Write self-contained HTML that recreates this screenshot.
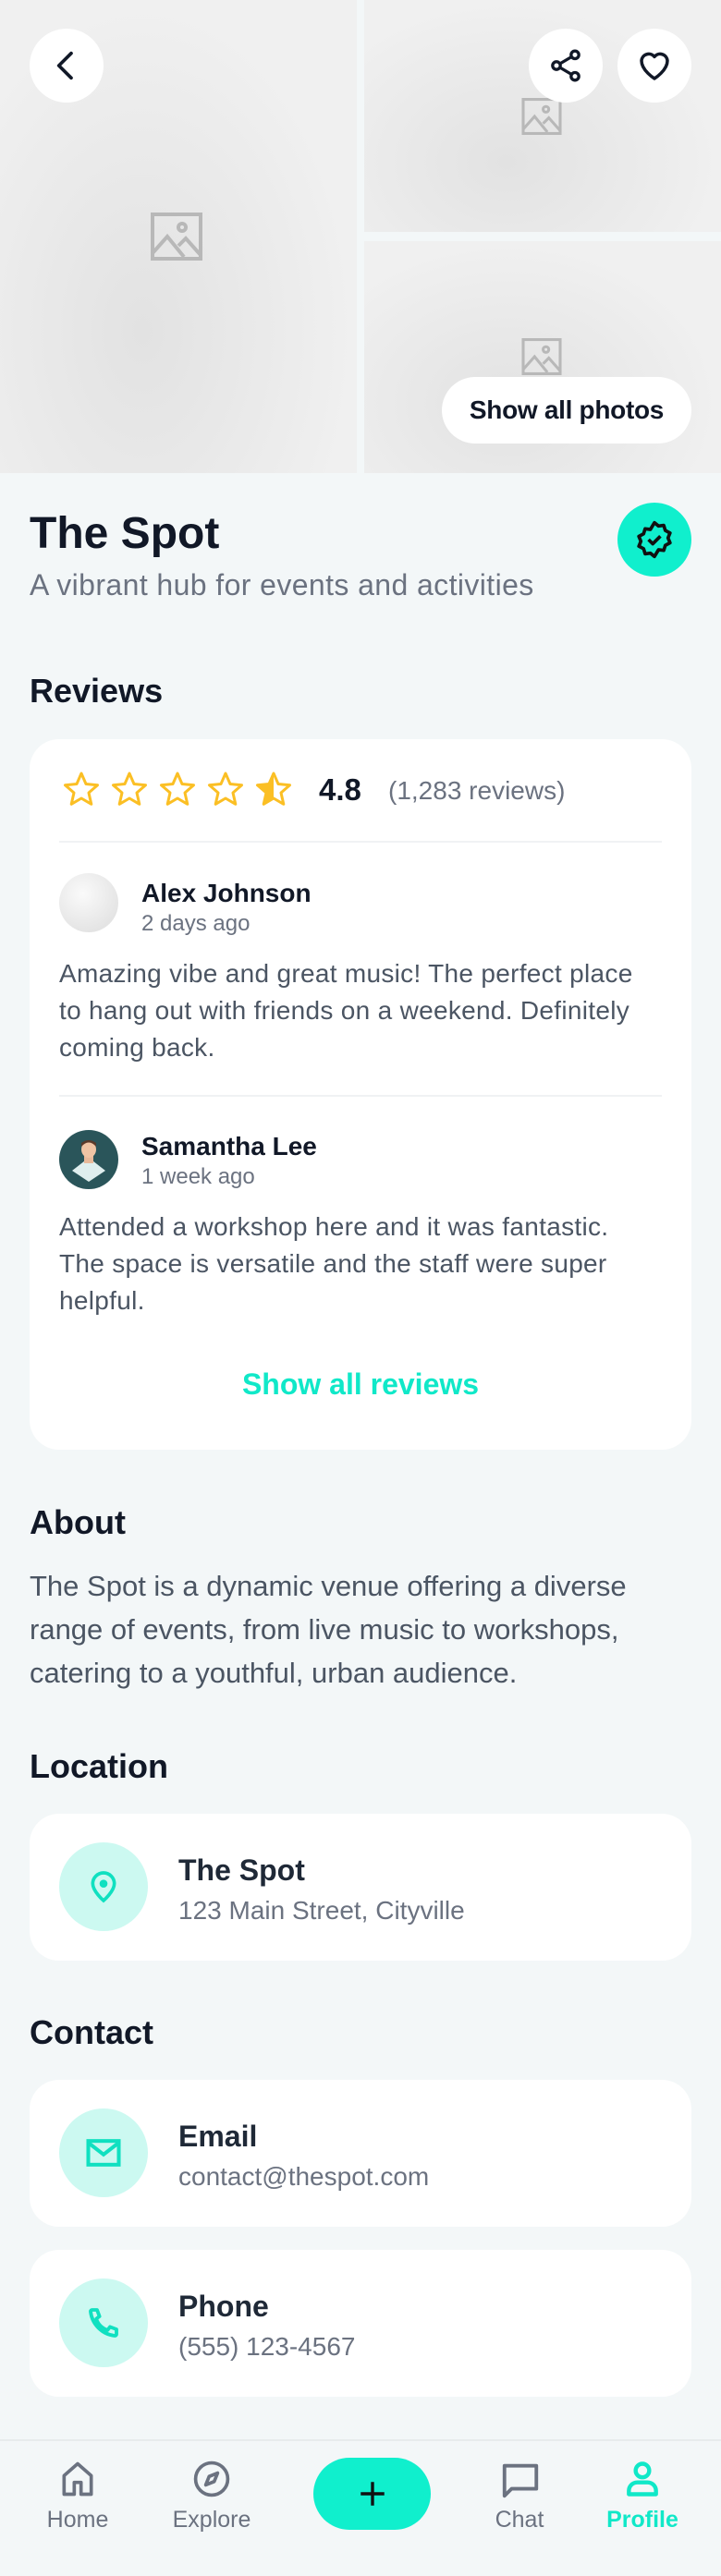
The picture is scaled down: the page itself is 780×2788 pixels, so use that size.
<!DOCTYPE html>
<html><head><meta charset="utf-8"><style>
*{margin:0;padding:0;box-sizing:border-box}
body{width:780px;height:2788px;background:#f3f7f8;font-family:"Liberation Sans",sans-serif;position:relative;overflow:hidden;color:#111827}
.a{position:absolute}
.img{position:absolute;background:radial-gradient(ellipse at 40% 70%,#e2e2e2,#f0f0f0 70%)}
.circ{position:absolute;width:80px;height:80px;border-radius:50%;background:#fff;display:flex;align-items:center;justify-content:center}
.card{position:absolute;left:32px;width:716px;background:#fff;border-radius:32px}
h2{position:absolute;left:32px;font-size:36px;font-weight:bold;color:#111827;line-height:40px}
.gray{color:#6b7280}
.rt{position:absolute;font-size:28px;line-height:40px;color:#4b5563;left:64px;width:680px;white-space:nowrap}
.ic{position:absolute;left:64px;width:96px;height:96px;border-radius:50%;background:#ccf9f1;display:flex;align-items:center;justify-content:center}
.t1{position:absolute;left:193px;font-size:32px;font-weight:bold;color:#1f2937}
.t2{position:absolute;left:193px;font-size:28px;color:#6b7280}
.nav{position:absolute;top:2661px;margin-left:-22px}
.nl{position:absolute;top:2713px;font-size:25px;color:#6b7280;width:140px;margin-left:-70px;text-align:center}
</style></head><body>
<div class="img" style="left:0;top:0;width:386px;height:512px"></div>
<div class="img" style="left:394px;top:0;width:386px;height:251px"></div>
<div class="img" style="left:394px;top:261px;width:386px;height:251px"></div>
<svg class="a" style="left:163px;top:230px" width="56" height="52" viewBox="0 0 56 52" fill="none" stroke="#b8b8b8" stroke-width="4"><rect x="2" y="2" width="52" height="48"/><path d="M2 44l16-18 18 22M30 36l8-8 16 18"/><circle cx="34" cy="16" r="4"/></svg>
<svg class="a" style="left:564px;top:106px" width="44" height="40" viewBox="0 0 56 52" fill="none" stroke="#b8b8b8" stroke-width="4"><rect x="2" y="2" width="52" height="48"/><path d="M2 44l16-18 18 22M30 36l8-8 16 18"/><circle cx="34" cy="16" r="4"/></svg>
<svg class="a" style="left:564px;top:366px" width="44" height="40" viewBox="0 0 56 52" fill="none" stroke="#b8b8b8" stroke-width="4"><rect x="2" y="2" width="52" height="48"/><path d="M2 44l16-18 18 22M30 36l8-8 16 18"/><circle cx="34" cy="16" r="4"/></svg>
<div class="circ" style="left:32px;top:31px"><svg width="40" height="40" viewBox="0 0 24 24" fill="none" stroke="#111827" stroke-width="2.2" stroke-linecap="round" stroke-linejoin="round"><path d="M15 4l-8 8 8 8"/></svg></div>
<div class="circ" style="left:572px;top:31px"><svg width="40" height="40" viewBox="0 0 24 24" fill="none" stroke="#111827" stroke-width="2"><circle cx="18" cy="5" r="2.5"/><circle cx="6" cy="12" r="2.5"/><circle cx="18" cy="19" r="2.5"/><path d="M8.2 10.8l7.6-4.5M8.2 13.2l7.6 4.5"/></svg></div>
<div class="circ" style="left:668px;top:31px"><svg width="42" height="42" viewBox="0 0 24 24" fill="none" stroke="#111827" stroke-width="2" stroke-linejoin="round"><path d="M12 20s-8-5-8-11a4.5 4.5 0 0 1 8-2.5A4.5 4.5 0 0 1 20 9c0 6-8 11-8 11z"/></svg></div>
<div class="a" style="left:478px;top:408px;width:270px;height:72px;border-radius:36px;background:#fff;font-size:28px;font-weight:bold;color:#111827;line-height:72px;text-align:center;letter-spacing:-0.3px">Show all photos</div>
<div class="a" style="left:32px;top:548px;font-size:48px;font-weight:bold;line-height:60px">The Spot</div>
<div class="a gray" style="left:32px;top:612px;font-size:32px;line-height:42px;letter-spacing:0.4px">A vibrant hub for events and activities</div>
<div class="a" style="left:668px;top:544px;width:80px;height:80px;border-radius:50%;background:#10efcd;display:flex;align-items:center;justify-content:center"><svg width="44" height="44" viewBox="0 0 24 24" fill="none" stroke="#111" stroke-width="2" stroke-linejoin="round"><path d="M12 2l2.4 2 3.1-.4.9 3 2.8 1.5-1.2 2.9 1.2 2.9-2.8 1.5-.9 3-3.1-.4L12 22l-2.4-2-3.1.4-.9-3-2.8-1.5 1.2-2.9L2.8 10.1 5.6 8.6l.9-3 3.1.4z"/><path d="M8.5 12l2.5 2.5 4.5-4.5"/></svg></div>
<h2 style="top:728px">Reviews</h2>
<div class="card" style="top:800px;height:769px"></div>
<svg class="a" style="left:64px;top:834px" width="260" height="42" viewBox="0 0 260 42">
<defs><path id="s" d="M20 3l5 11.5 12.5 1.2-9.5 8.3 2.8 12.3L20 30l-10.8 6.3L12 24 2.5 15.7 15 14.5z" fill="none" stroke="#fbbf24" stroke-width="3" stroke-linejoin="round"/></defs>
<use href="#s" x="4"/><use href="#s" x="56"/><use href="#s" x="108"/><use href="#s" x="160"/>
<path d="M232 3v27l-10.8 6.3L224 24l-9.5-8.3 12.5-1.2z" fill="#fbbf24"/><use href="#s" x="212"/></svg>
<div class="a" style="left:345px;top:835px;font-size:33px;font-weight:bold;line-height:40px">4.8</div>
<div class="a gray" style="left:420px;top:837px;font-size:28px;line-height:38px">(1,283 reviews)</div>
<div class="a" style="left:64px;top:910px;width:652px;height:2px;background:#f0f2f4"></div>
<div class="a" style="left:64px;top:945px;width:64px;height:64px;border-radius:50%;background:radial-gradient(circle at 40% 35%,#fafafa,#dcdcdc)"></div>
<div class="a" style="left:153px;top:950px;font-size:28px;font-weight:bold;line-height:34px">Alex Johnson</div>
<div class="a gray" style="left:153px;top:985px;font-size:24px;line-height:30px">2 days ago</div>
<div class="rt" style="top:1034px;letter-spacing:0.3px">Amazing vibe and great music! The perfect place<br>to hang out with friends on a weekend. Definitely<br>coming back.</div>
<div class="a" style="left:64px;top:1185px;width:652px;height:2px;background:#f0f2f4"></div>
<svg class="a" style="left:64px;top:1223px" width="64" height="64" viewBox="0 0 64 64"><circle cx="32" cy="32" r="32" fill="#2a555a"/><path d="M14 44l18-14 18 14-18 12z" fill="#dfeeee"/><rect x="27" y="26" width="10" height="10" fill="#e8b99a"/><ellipse cx="32" cy="21" rx="8" ry="9" fill="#f0c4a4"/><path d="M24 18q8-9 16 0v-4q-8-6-16 0z" fill="#5a3a2a"/></svg>
<div class="a" style="left:153px;top:1224px;font-size:28px;font-weight:bold;line-height:34px">Samantha Lee</div>
<div class="a gray" style="left:153px;top:1259px;font-size:24px;line-height:30px">1 week ago</div>
<div class="rt" style="top:1308px;letter-spacing:0.3px">Attended a workshop here and it was fantastic.<br>The space is versatile and the staff were super<br>helpful.</div>
<div class="a" style="left:32px;width:716px;top:1477px;text-align:center;font-size:32px;font-weight:bold;color:#10e8c8;line-height:42px">Show all reviews</div>
<h2 style="top:1628px">About</h2>
<div class="a" style="left:32px;top:1693px;width:716px;font-size:31px;line-height:47px;color:#4b5563">The Spot is a dynamic venue offering a diverse range of events, from live music to workshops, catering to a youthful, urban audience.</div>
<h2 style="top:1892px">Location</h2>
<div class="card" style="top:1963px;height:159px"></div>
<div class="ic" style="top:1994px"><svg width="40" height="40" viewBox="0 0 24 24" fill="none" stroke="#10e0c0" stroke-width="2.2"><path d="M12 21s-7-6-7-11a7 7 0 0 1 14 0c0 5-7 11-7 11z"/><circle cx="12" cy="10" r="1.5" fill="#10e0c0"/></svg></div>
<div class="t1" style="top:2006px">The Spot</div>
<div class="t2" style="top:2052px">123 Main Street, Cityville</div>
<h2 style="top:2180px">Contact</h2>
<div class="card" style="top:2251px;height:159px"></div>
<div class="ic" style="top:2282px"><svg width="44" height="44" viewBox="0 0 24 24" fill="none" stroke="#10e0c0" stroke-width="2.2"><rect x="3" y="5" width="18" height="14"/><path d="M3 6l9 7 9-7"/></svg></div>
<div class="t1" style="top:2294px">Email</div>
<div class="t2" style="top:2340px">contact@thespot.com</div>
<div class="card" style="top:2435px;height:159px"></div>
<div class="ic" style="top:2466px"><svg width="42" height="42" viewBox="0 0 24 24" fill="none" stroke="#10e0c0" stroke-width="2.2" stroke-linejoin="round"><path d="M5 4h3l1.5 4-2 1.5a11 11 0 0 0 7 7l1.5-2 4 1.5v3a1 1 0 0 1-1 1A17 17 0 0 1 4 5a1 1 0 0 1 1-1z"/></svg></div>
<div class="t1" style="top:2478px">Phone</div>
<div class="t2" style="top:2524px">(555) 123-4567</div>
<div class="a" style="left:0;top:2640px;width:780px;height:2px;background:#e8eced"></div>
<svg class="nav" style="left:84px" width="44" height="44" viewBox="0 0 24 24" fill="none" stroke="#6b7280" stroke-width="2" stroke-linejoin="round"><path d="M4 21V10l8-7 8 7v11h-6v-7h-4v7z"/></svg>
<div class="nl" style="left:84px">Home</div>
<svg class="nav" style="left:229px" width="44" height="44" viewBox="0 0 24 24" fill="none" stroke="#6b7280" stroke-width="2" stroke-linejoin="round"><circle cx="12" cy="12" r="9.5"/><path d="M15.5 8.5l-2 5-5 2 2-5z"/></svg>
<div class="nl" style="left:229px">Explore</div>
<div class="a" style="left:339px;top:2660px;width:127px;height:78px;border-radius:39px;background:#10efcd;display:flex;align-items:center;justify-content:center"><svg width="34" height="34" viewBox="0 0 24 24" stroke="#111" stroke-width="2.4"><path d="M12 3v18M3 12h18"/></svg></div>
<svg class="nav" style="left:562px" width="46" height="46" viewBox="0 0 24 24" fill="none" stroke="#6b7280" stroke-width="2" stroke-linejoin="round"><path d="M3 4h18v13H7l-4 4z"/></svg>
<div class="nl" style="left:562px">Chat</div>
<svg class="nav" style="left:695px" width="44" height="44" viewBox="0 0 24 24" fill="none" stroke="#10e8c8" stroke-width="2.4" stroke-linejoin="round"><circle cx="12" cy="7" r="4"/><path d="M4 21v-2a5 5 0 0 1 5-5h6a5 5 0 0 1 5 5v2z"/></svg>
<div class="nl" style="left:695px;color:#10e8c8;font-weight:bold">Profile</div>
</body></html>
